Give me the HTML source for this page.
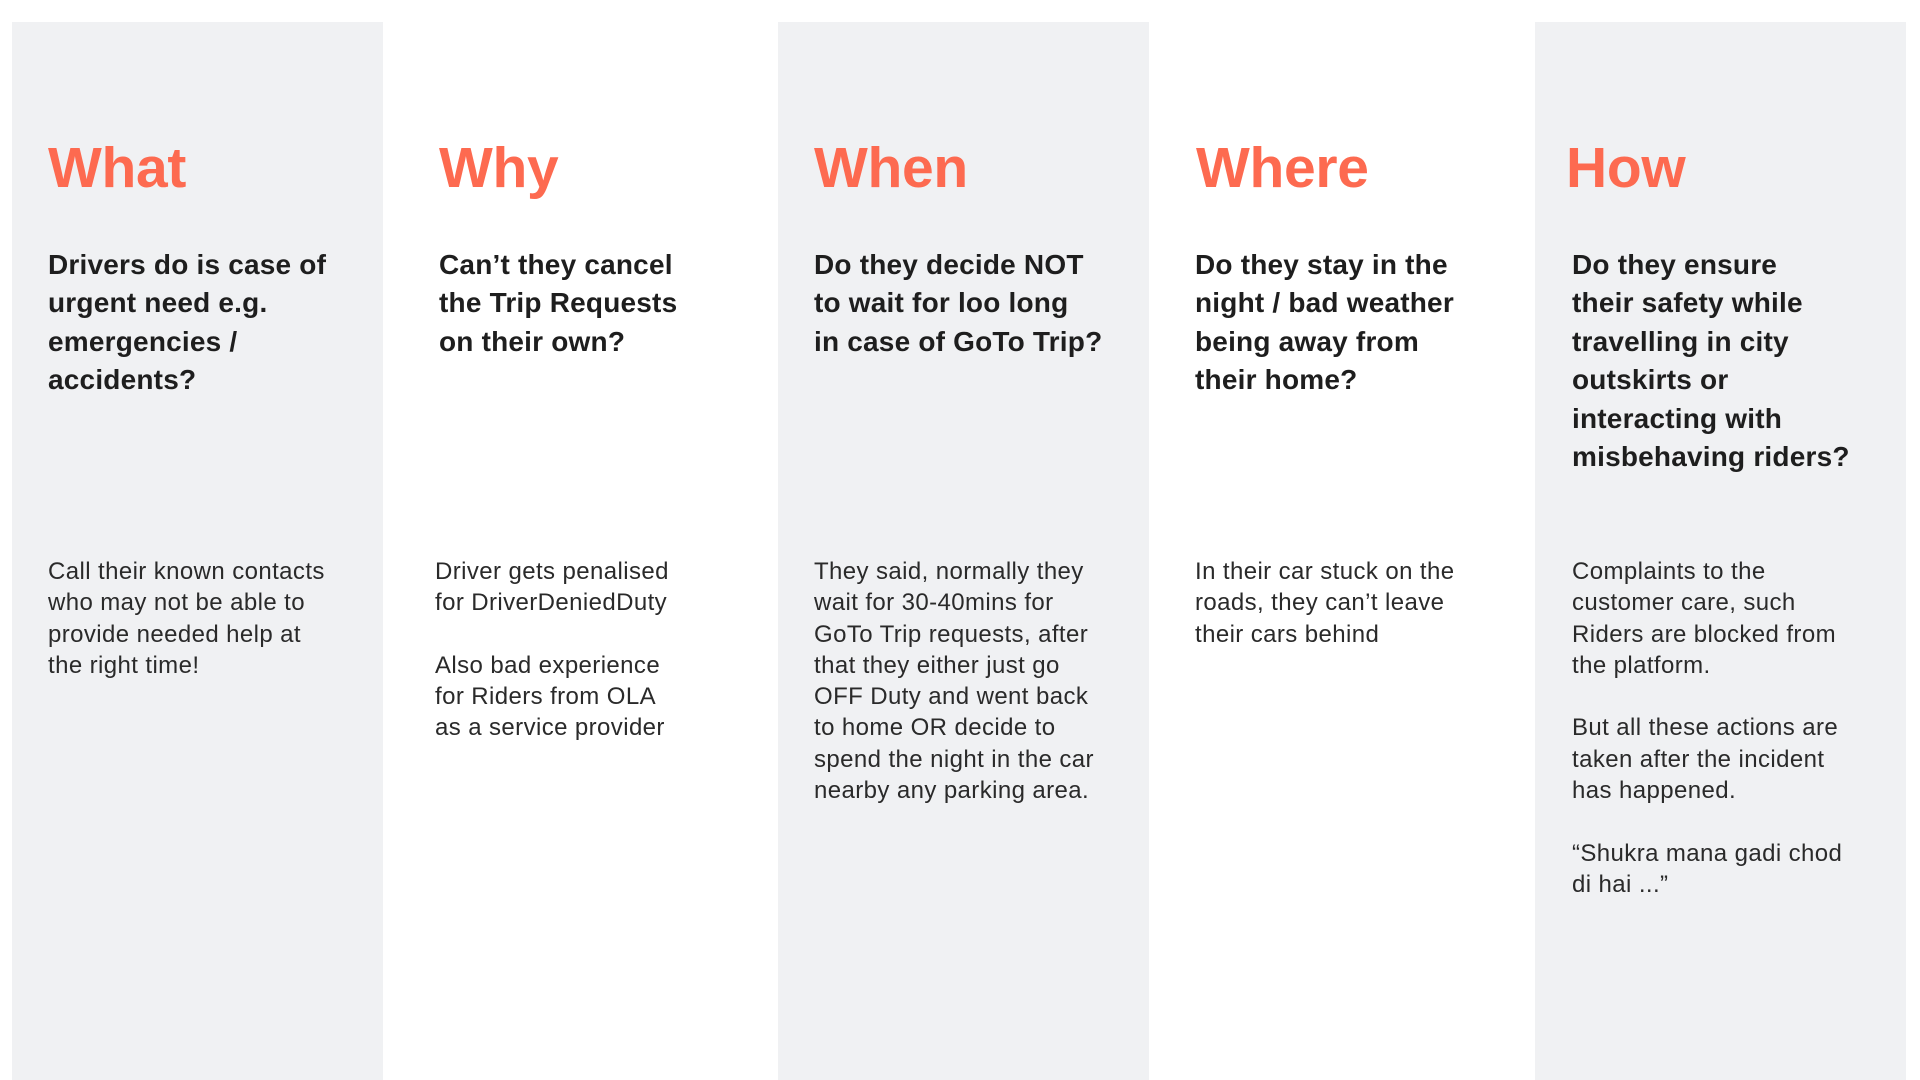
<!DOCTYPE html>
<html><head><meta charset="utf-8"><style>
html,body{margin:0;padding:0;width:1920px;height:1080px;background:#fff;overflow:hidden;font-family:"Liberation Sans",sans-serif;}
.p{position:absolute;top:22px;height:1058px;width:371px;background:#f0f1f3;}
h1{position:absolute;top:135px;margin:0;font-size:57px;font-weight:bold;color:#fd6a50;white-space:nowrap;letter-spacing:-0.3px}
.q{position:absolute;top:246px;font-size:28px;font-weight:bold;line-height:38.4px;color:#1e1e1e;white-space:nowrap;letter-spacing:0.2px}
.b{position:absolute;top:556px;font-size:24px;line-height:31.3px;color:#2a2a2a;white-space:nowrap;letter-spacing:0.4px}
</style></head><body>
<div class="p" style="left:12px"></div>
<div class="p" style="left:778px"></div>
<div class="p" style="left:1535px"></div>

<h1 style="left:48px">What</h1>
<div class="q" style="left:48px">Drivers do is case of<br>urgent need e.g.<br>emergencies /<br>accidents?</div>
<div class="b" style="left:48px">Call their known contacts<br>who may not be able to<br>provide needed help at<br>the right time!</div>

<h1 style="left:439px">Why</h1>
<div class="q" style="left:439px">Can’t they cancel<br>the Trip Requests<br>on their own?</div>
<div class="b" style="left:435px">Driver gets penalised<br>for DriverDeniedDuty<br><br>Also bad experience<br>for Riders from OLA<br>as a service provider</div>

<h1 style="left:814px">When</h1>
<div class="q" style="left:814px">Do they decide NOT<br>to wait for loo long<br>in case of GoTo Trip?</div>
<div class="b" style="left:814px">They said, normally they<br>wait for 30-40mins for<br>GoTo Trip requests, after<br>that they either just go<br>OFF Duty and went back<br>to home OR decide to<br>spend the night in the car<br>nearby any parking area.</div>

<h1 style="left:1196px">Where</h1>
<div class="q" style="left:1195px">Do they stay in the<br>night / bad weather<br>being away from<br>their home?</div>
<div class="b" style="left:1195px">In their car stuck on the<br>roads, they can’t leave<br>their cars behind</div>

<h1 style="left:1566px">How</h1>
<div class="q" style="left:1572px">Do they ensure<br>their safety while<br>travelling in city<br>outskirts or<br>interacting with<br>misbehaving riders?</div>
<div class="b" style="left:1572px">Complaints to the<br>customer care, such<br>Riders are blocked from<br>the platform.<br><br>But all these actions are<br>taken after the incident<br>has happened.<br><br>“Shukra mana gadi chod<br>di hai ...”</div>
</body></html>
